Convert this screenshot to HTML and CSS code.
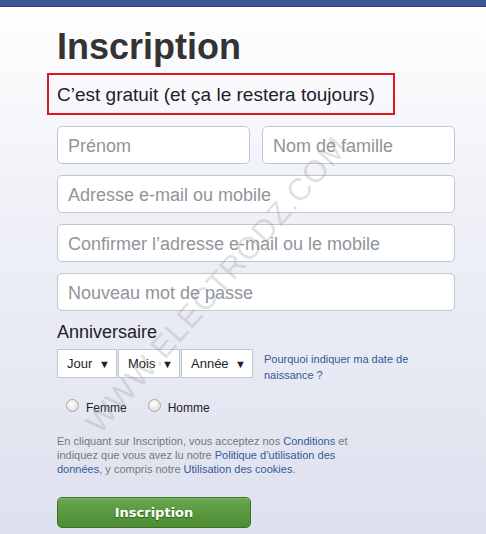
FILE: index.html
```html
<!DOCTYPE html>
<html lang="fr">
<head>
  <meta charset="UTF-8" />
  <title>Inscription</title>
  <link rel="stylesheet" href="styles.css">
</head>
<body>
  <div class="topbar"></div>
  <div class="signup">
    <h1>Inscription</h1>
    <div class="free">C’est gratuit (et ça le restera toujours)</div>
    <div class="fields">
      <div class="field-row">
        <div class="field">Prénom</div>
        <div class="field">Nom de famille</div>
      </div>
      <div class="field">Adresse e-mail ou mobile</div>
      <div class="field">Confirmer l’adresse e-mail ou le mobile</div>
      <div class="field">Nouveau mot de passe</div>
    </div>
    <h2>Anniversaire</h2>
    <div class="birthday">
      <div class="selects">
        <span class="sel sel-day">Jour <i>▼</i></span>
        <span class="sel sel-month">Mois <i>▼</i></span>
        <span class="sel sel-year">Année <i>▼</i></span>
      </div>
      <a class="why" href="#">Pourquoi indiquer ma date de naissance ?</a>
    </div>
    <div class="gender">
      <label><span class="radio"></span>Femme</label>
      <label><span class="radio"></span>Homme</label>
    </div>
    <p class="legal">En cliquant sur Inscription, vous acceptez nos <a href="#">Conditions</a> et<br>indiquez que vous avez lu notre <a href="#">Politique d’utilisation des</a><br><a href="#">données</a>, y compris notre <a href="#">Utilisation des cookies</a>.</p>
    <button class="submit">Inscription</button>
  </div>
  <div class="watermark">WWW.ELECTRODZ.COM</div>
</body>
</html>
```

FILE: styles.css
```css
html, body {
  margin: 0;
  height: 100%;
}
body {
  font-family: "Liberation Sans", Arial, sans-serif;
  background: linear-gradient(180deg, #ffffff 0%, #f1f2f8 35%, #dde1ee 100%);
  color: #1d2129;
  overflow: hidden;
}
.topbar {
  height: 6px;
  background: #3b5998;
  border-bottom: 1px solid #2d4473;
}
.signup {
  padding-left: 57px;
  width: 398px;
}
h1 {
  margin: 20px 0 0;
  font-size: 36px;
  line-height: 40px;
  color: #333;
}
.free {
  display: inline-block;
  margin: 6px 0 0 -10px;
  padding: 0 18px 0 8px;
  border: 2px solid #e3161e;
  height: 38px;
  line-height: 40px;
  font-size: 19px;
  color: #1d2129;
}
.fields {
  display: flex;
  flex-direction: column;
  gap: 11px;
  margin-top: 11px;
}
.field-row {
  display: grid;
  grid-template-columns: 1fr 1fr;
  gap: 12px;
}
.field {
  box-sizing: border-box;
  height: 38px;
  padding: 0 10px;
  line-height: 38px;
  font-size: 18px;
  color: #90949c;
  background: #fff;
  border: 1px solid #bdc7d8;
  border-radius: 5px;
}
h2 {
  margin: 10px 0 0;
  font-size: 18px;
  font-weight: normal;
  line-height: 22px;
}
.birthday {
  display: flex;
  gap: 11px;
  margin-top: 6px;
}
.selects {
  display: flex;
  gap: 1px;
}
.sel {
  box-sizing: border-box;
  display: flex;
  justify-content: space-between;
  align-items: center;
  height: 29px;
  padding: 0 6px 0 9px;
  background: #fff;
  border: 1px solid #bdc7d8;
  font-size: 13px;
  color: #1d2129;
}
.sel i {
  font-style: normal;
  font-size: 11px;
}
.sel-day { width: 60px; }
.sel-month { width: 62px; }
.sel-year { width: 72px; }
.why {
  width: 160px;
  margin-top: 2px;
  font-size: 11px;
  line-height: 16px;
  color: #365899;
  text-decoration: none;
}
.gender {
  display: flex;
  gap: 21px;
  margin: 18px 0 0 9px;
  font-size: 12px;
}
.gender label {
  display: flex;
  align-items: center;
  gap: 7px;
}
.radio {
  width: 11px;
  height: 11px;
  border-radius: 50%;
  border: 1px solid #a8a8a8;
  background: radial-gradient(circle at 40% 35%, #ffffff, #d6d6d6);
  margin-top: -6px;
}
.legal {
  margin: 19px 0 0;
  width: 320px;
  font-size: 11px;
  line-height: 14px;
  color: #777;
}
.legal a {
  color: #365899;
  text-decoration: none;
}
.submit {
  display: block;
  margin-top: 21px;
  width: 194px;
  height: 31px;
  font-family: "DejaVu Sans", sans-serif;
  font-weight: bold;
  font-size: 13px;
  color: #fff;
  text-shadow: 0 1px 1px #2b5a16;
  background: linear-gradient(#69a74e, #4d8b33);
  border: 1px solid #3d7027;
  border-radius: 5px;
  box-shadow: inset 0 1px 0 #7fbb63;
}
.watermark {
  position: absolute;
  left: 17px;
  top: 267px;
  width: 400px;
  text-align: center;
  transform: rotate(-49deg);
  font-size: 31px;
  letter-spacing: 1px;
  color: rgba(150, 150, 150, 0.3);
  pointer-events: none;
}
```
